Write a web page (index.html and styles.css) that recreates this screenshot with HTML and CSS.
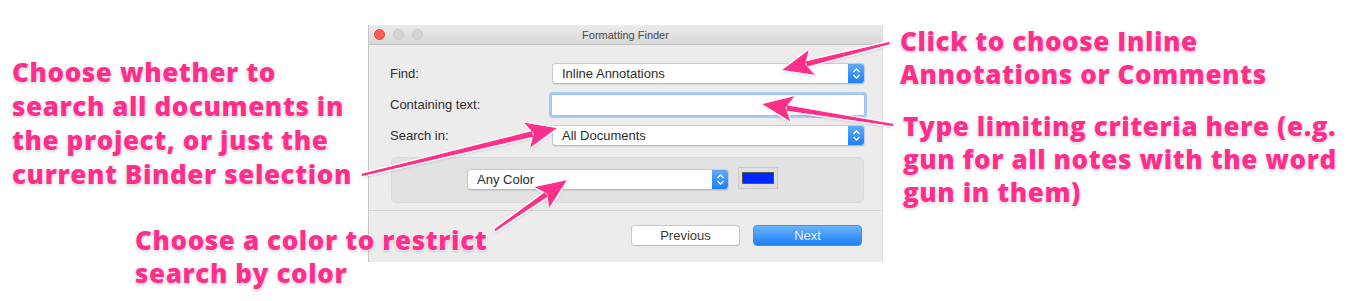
FILE: index.html
```html
<!DOCTYPE html>
<html>
<head>
<meta charset="utf-8">
<link rel="stylesheet" href="styles.css">
</head>
<body>
<div class="canvas">
  <div class="window">
    <div class="titlebar">
      <div class="lights">
        <span class="light red"></span>
        <span class="light"></span>
        <span class="light"></span>
      </div>
      <div class="title">Formatting Finder</div>
    </div>
    <div class="content">
      <div class="form">
        <div class="label">Find:</div>
        <div class="popup"><span class="ptext">Inline Annotations</span><span class="stepper"><svg width="9" height="13" viewBox="0 0 9 13"><path d="M1.5 5 L4.5 2 L7.5 5 M1.5 8 L4.5 11 L7.5 8" fill="none" stroke="#fff" stroke-width="1.3"/></svg></span></div>
        <div class="label">Containing text:</div>
        <div class="field"></div>
        <div class="label">Search in:</div>
        <div class="popup"><span class="ptext">All Documents</span><span class="stepper"><svg width="9" height="13" viewBox="0 0 9 13"><path d="M1.5 5 L4.5 2 L7.5 5 M1.5 8 L4.5 11 L7.5 8" fill="none" stroke="#fff" stroke-width="1.3"/></svg></span></div>
      </div>
      <div class="group">
        <div class="popup color-popup"><span class="ptext">Any Color</span><span class="stepper"><svg width="9" height="13" viewBox="0 0 9 13"><path d="M1.5 5 L4.5 2 L7.5 5 M1.5 8 L4.5 11 L7.5 8" fill="none" stroke="#fff" stroke-width="1.3"/></svg></span></div>
        <div class="well"><span class="swatch"></span></div>
      </div>
      <div class="separator"></div>
      <div class="footer">
        <div class="btn">Previous</div>
        <div class="btn primary">Next</div>
      </div>
    </div>
  </div>

  <div class="note note-left">Choose whether to<br>search all documents in<br>the project, or just the<br>current Binder selection</div>
  <div class="note note-r1">Click to choose Inline<br>Annotations or Comments</div>
  <div class="note note-r2">Type limiting criteria here (e.g.<br>gun for all notes with the word<br>gun in them)</div>
  <div class="note note-bottom">Choose a color to restrict<br>search by color</div>

  <svg class="arrows" width="1355" height="301" viewBox="0 0 1355 301">
    <defs>
      <filter id="halo" x="-20%" y="-20%" width="140%" height="140%">
        <feMorphology in="SourceAlpha" operator="dilate" radius="1.2" result="d"/>
        <feFlood flood-color="#ffffff"/>
        <feComposite in2="d" operator="in" result="w"/>
        <feGaussianBlur in="SourceAlpha" stdDeviation="1.5" result="b"/>
        <feOffset in="b" dy="1" result="o"/>
        <feFlood flood-color="#000" flood-opacity="0.3"/>
        <feComposite in2="o" operator="in" result="s"/>
        <feMerge><feMergeNode in="s"/><feMergeNode in="w"/><feMergeNode in="SourceGraphic"/></feMerge>
      </filter>
      <g id="arrowhead">
        <path d="M0 0 L-31 -13 L-24 0 L-31 13 Z"/>
      </g>
    </defs>
    <g fill="#fe2f8b" filter="url(#halo)">
      <g transform="translate(782 70) rotate(165.96)">
        <polygon points="-111,-1.3 -25,-2.8 -25,2.8 -111,1.3"/>
        <use href="#arrowhead"/>
      </g>
      <g transform="translate(762 104) rotate(189.1)">
        <polygon points="-133,-1.3 -25,-2.8 -25,2.8 -133,1.3"/>
        <use href="#arrowhead"/>
      </g>
      <g transform="translate(557 128) rotate(-13.55)">
        <polygon points="-201,-1.3 -25,-2.9 -25,2.9 -201,1.3"/>
        <use href="#arrowhead"/>
      </g>
      <g transform="translate(567 180) rotate(-34.78)">
        <polygon points="-88,-1.3 -25,-2.8 -25,2.8 -88,1.3"/>
        <use href="#arrowhead"/>
      </g>
    </g>
  </svg>
</div>
</body>
</html>
```

FILE: styles.css
```css
html, body {
  margin: 0;
  padding: 0;
  background: #ffffff;
}

.canvas {
  position: relative;
  width: 1355px;
  height: 301px;
  overflow: hidden;
  font-family: "Liberation Sans", Arial, sans-serif;
}

.window {
  position: absolute;
  left: 368px;
  top: 25px;
  width: 515px;
  height: 237px;
  background: #ececec;
  border-left: 1px solid #c6c6c6;
  border-right: 1px solid #dcdcdc;
  box-sizing: border-box;
  display: flex;
  flex-direction: column;
}

.titlebar {
  height: 19px;
  flex: none;
  background: linear-gradient(#ebebeb, #d8d8d8);
  border-bottom: 1px solid #c4c4c4;
  display: flex;
  align-items: center;
  position: relative;
}

.lights {
  display: flex;
  gap: 8px;
  padding-left: 5px;
}

.light {
  width: 11px;
  height: 11px;
  border-radius: 50%;
  background: #d5d5d5;
  border: 1px solid #c8c8c8;
  box-sizing: border-box;
}

.light.red {
  background: #fc5e57;
  border-color: #e4463f;
}

.title {
  position: absolute;
  left: 0;
  right: 0;
  text-align: center;
  font-size: 11px;
  color: #4a4a4a;
}

.content {
  flex: 1;
  display: flex;
  flex-direction: column;
  padding: 18px 19px 0 21px;
}

.form {
  display: grid;
  grid-template-columns: 162px 313px;
  grid-auto-rows: 21px;
  row-gap: 10px;
  align-items: center;
}

.label {
  font-size: 13px;
  color: #2c2c2c;
}

.popup {
  height: 21px;
  box-sizing: border-box;
  background: #ffffff;
  border: 1px solid #cacaca;
  border-bottom-color: #b9b9b9;
  border-radius: 4px;
  display: flex;
  align-items: center;
  justify-content: space-between;
  overflow: hidden;
  box-shadow: 0 0.5px 1px rgba(0,0,0,0.08);
}

.ptext {
  font-size: 13px;
  color: #2c2c2c;
  padding-left: 9px;
}

.stepper {
  width: 17px;
  height: 21px;
  margin-right: -1px;
  background: linear-gradient(#62acfd, #1a7ef6);
  display: flex;
  align-items: center;
  justify-content: center;
}

.field {
  height: 22px;
  box-sizing: border-box;
  background: #ffffff;
  border: 1px solid #9fc1ea;
  box-shadow: 0 0 0 2px #a9caf3;
  border-radius: 2px;
  margin-left: -1px;
}

.group {
  margin-top: 11px;
  margin-left: 1px;
  width: 473px;
  height: 46px;
  box-sizing: border-box;
  background: #e2e2e2;
  border: 1px solid #dadada;
  border-radius: 5px;
  display: flex;
  align-items: center;
  padding-left: 75px;
  gap: 9px;
}

.color-popup {
  width: 262px;
  margin-top: -2px;
}

.well {
  width: 40px;
  height: 22px;
  box-sizing: border-box;
  background: #dedede;
  border: 1px solid #c9c9c9;
  display: flex;
  align-items: center;
  justify-content: center;
  margin-top: -4px;
}

.swatch {
  width: 32px;
  height: 12px;
  box-sizing: border-box;
  background: #0027ff;
  border: 1px solid #555;
}

.separator {
  height: 1px;
  background: #d4d4d4;
  margin: 7px -19px 0 -21px;
}

.footer {
  display: flex;
  justify-content: flex-end;
  gap: 13px;
  padding-top: 14px;
  padding-right: 1px;
}

.btn {
  width: 109px;
  height: 21px;
  box-sizing: border-box;
  border-radius: 4px;
  background: #ffffff;
  border: 1px solid #c8c8c8;
  border-bottom-color: #b8b8b8;
  font-size: 13px;
  color: #3a3a3a;
  display: flex;
  align-items: center;
  justify-content: center;
}

.btn.primary {
  background: linear-gradient(#6bb3fc, #1b80f6);
  border-color: #3d8ff0;
  color: #e6f1ff;
}

.note {
  position: absolute;
  font-family: "Open Sans", "DejaVu Sans", sans-serif;
  font-weight: 800;
  font-size: 26px;
  line-height: 34px;
  color: #fe2f8b;
  white-space: nowrap;
  letter-spacing: 0.6px;
  text-shadow: 0 0 2px #fff, 0 0 2px #fff, 0 0 2px #fff, 0 1px 3px rgba(0,0,0,0.35);
}

.note-left {
  left: 12px;
  top: 55px;
}

.note-r1 {
  left: 900px;
  top: 25px;
  line-height: 33px;
}

.note-r2 {
  left: 903px;
  top: 110px;
  line-height: 33px;
}

.note-bottom {
  left: 135px;
  top: 224px;
  line-height: 33px;
}

.arrows {
  position: absolute;
  left: 0;
  top: 0;
  pointer-events: none;
}
```
